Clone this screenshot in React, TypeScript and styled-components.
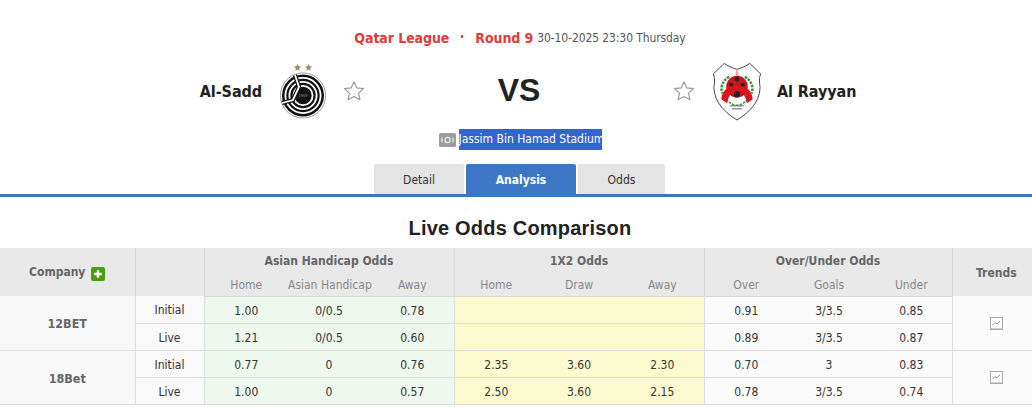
import React from "react";
import styled, { createGlobalStyle } from "styled-components";

const Global = createGlobalStyle`
  html, body { margin: 0; padding: 0; background: #fff; overflow: hidden; }
  body { width: 1032px; height: 408px; font-family: "DejaVu Sans", "Liberation Sans", sans-serif; font-stretch: condensed; font-size: 12px; color: #333; }
`;

const Page = styled.div`
  width: 1040px;
  padding-top: 28px;
`;

const MatchInfo = styled.div`
  height: 20px;
  display: flex;
  justify-content: center;
  align-items: center;
  gap: 4px;
`;

const League = styled.span`
  font-size: 14px;
  font-weight: 700;
  color: #df3b3b;
  letter-spacing: -0.08px;
`;

const Dot = styled.span`
  width: 2px;
  height: 3px;
  margin: 0 8px 3px 8px;
  background: #df3b3b;
`;

const MatchTime = styled.span`
  font-size: 12px;
  color: #555;
  letter-spacing: -0.1px;
`;

const Teams = styled.div`
  display: grid;
  grid-template-columns: 1fr 308px 1fr;
  align-items: center;
  height: 66px;
  margin: 10px 2px 0 0;
`;

const Team = styled.div<{ $away?: boolean }>`
  display: flex;
  align-items: center;
  justify-content: ${(p) => (p.$away ? "flex-start" : "flex-end")};
`;

const TeamName = styled.span<{ $away?: boolean }>`
  font-size: 16px;
  font-weight: 700;
  color: #222;
  letter-spacing: -0.08px;
  margin: ${(p) => (p.$away ? "0 0 0 15px" : "0 18px 0 0")};
`;

const FavStar = styled.svg<{ $away?: boolean }>`
  width: 22px;
  height: 22px;
  margin: ${(p) => (p.$away ? "0 17px 0 0" : "0 0 0 17px")};
`;

const Versus = styled.div`
  text-align: center;
  font-family: "Liberation Sans", sans-serif;
  font-size: 32px;
  font-weight: 700;
  color: #222;
  margin-top: -2px;
`;

const Venue = styled.div`
  display: flex;
  justify-content: center;
  align-items: center;
  gap: 3px;
  margin-top: 5px;
  height: 21px;
`;

const VenueName = styled.span`
  display: block;
  width: 143px;
  line-height: 21px;
  background: #3366cc;
  color: #fff;
  font-size: 12px;
  white-space: nowrap;
  text-align: center;
`;

const TabBar = styled.div`
  display: flex;
  justify-content: center;
  gap: 2px;
  height: 30px;
  margin-top: 14px;
  border-bottom: 3px solid #3c76c4;
  padding-right: 1px;
`;

const Tab = styled.div<{ $active?: boolean; $w: number }>`
  width: ${(p) => p.$w}px;
  display: flex;
  align-items: center;
  justify-content: center;
  padding-top: 2px;
  box-sizing: border-box;
  font-size: 12px;
  font-weight: ${(p) => (p.$active ? 700 : 400)};
  color: ${(p) => (p.$active ? "#fff" : "#333")};
  background: ${(p) => (p.$active ? "#3c76c4" : "#e4e4e4")};
  border-radius: 2px 2px 0 0;
`;

const Title = styled.h2`
  margin: 0;
  height: 51px;
  line-height: 62px;
  text-align: center;
  font-family: "Liberation Sans", sans-serif;
  font-size: 20px;
  font-weight: 700;
  letter-spacing: 0.2px;
  color: #222;
  white-space: nowrap;
`;

const Table = styled.table`
  width: 1040px;
  table-layout: fixed;
  border-collapse: collapse;
`;

const Head = styled.th`
  background: #e9e9e9;
  color: #666;
  font-size: 12px;
  font-weight: 700;
  height: 24px;
  padding: 2px 0 0;
  box-sizing: border-box;
  white-space: nowrap;
  border-left: 1px solid #d8d8d8;
  &:first-child { border-left: 0; }
`;

const SubHead = styled.th<{ $left?: boolean }>`
  background: #e9e9e9;
  color: #888;
  font-size: 12px;
  font-weight: 400;
  height: 24px;
  padding: 2px 0 0 1px;
  box-sizing: border-box;
  white-space: nowrap;
  border-bottom: 1px solid #d8d8d8;
  border-left: ${(p) => (p.$left ? "1px solid #d8d8d8" : "0")};
`;

const PlusBadge = styled.span`
  display: inline-flex;
  align-items: center;
  justify-content: center;
  width: 14px;
  height: 14px;
  margin-left: 6px;
  background: #4b9e14;
  border-radius: 2px;
  vertical-align: -3px;
`;

const Row = styled.tr`
  height: 27px;
`;

const Company = styled.td`
  background: #f8f8f8;
  color: #666;
  font-size: 12.5px;
  font-weight: 700;
  text-align: center;
  padding: 2px 0 0;
  border-bottom: 1px solid #dedede;
`;

const Kind = styled.td`
  background: #f9f9f9;
  color: #333;
  text-align: center;
  padding: 2px 0 0;
  border-left: 1px solid #dedede;
  border-bottom: 1px solid #dedede;
`;

const tones = { green: "#eef8ee", yellow: "#fcfbd0", plain: "#fbfbfb" };

const Cell = styled.td<{ $tone: keyof typeof tones; $left?: boolean }>`
  background: ${(p) => tones[p.$tone]};
  color: #333;
  text-align: center;
  padding: 2px 0 0 1px;
  border-bottom: 1px solid #dedede;
  border-left: ${(p) => (p.$left ? "1px solid #dedede" : "0")};
`;

const TrendCell = styled.td`
  background: #fbfbfb;
  text-align: center;
  padding: 4px 0 0;
  border-left: 1px solid #dedede;
  border-bottom: 1px solid #dedede;
`;

const Star = ({ away }: { away?: boolean }) => (
  <FavStar $away={away} viewBox="0 0 22 22">
    <path
      d="M11 1.8l2.8 6.1 6.7.7-5 4.5 1.4 6.6L11 16.4l-5.9 3.3 1.4-6.6-5-4.5 6.7-.7z"
      fill="#fff"
      stroke="#9a9a9a"
      strokeWidth="1.2"
      strokeLinejoin="round"
    />
  </FavStar>
);

const SaddLogo = () => (
  <svg width="46" height="60" viewBox="0 0 46 60">
    <g fill="#a5865a" transform="translate(0 1.5)">
      <path d="M17.5 1.5l1.1 2.3 2.5.3-1.9 1.7.5 2.5-2.2-1.2-2.2 1.2.5-2.5-1.9-1.7 2.5-.3z" />
      <path d="M28.5 1.5l1.1 2.3 2.5.3-1.9 1.7.5 2.5-2.2-1.2-2.2 1.2.5-2.5-1.9-1.7 2.5-.3z" />
    </g>
    <circle cx="23" cy="34.5" r="22.6" fill="#fff" stroke="#888" strokeWidth="0.8" />
    <circle cx="23" cy="34.5" r="21" fill="#111" />
    <circle cx="23" cy="34.5" r="17.6" fill="none" stroke="#fff" strokeWidth="1.8" />
    <circle cx="23" cy="34.5" r="13.6" fill="none" stroke="#fff" strokeWidth="1.8" />
    <circle cx="23" cy="34.5" r="9.6" fill="none" stroke="#fff" strokeWidth="1.8" />
    <circle cx="23" cy="34.5" r="6.6" fill="#111" />
    <path d="M15 14L19 26 L13 39 L2 42" fill="none" stroke="#111" strokeWidth="4.2" />
    <path d="M15 14L19 26 L13 39 L2 42" fill="none" stroke="#fff" strokeWidth="1.8" />
    <text x="23" y="36" textAnchor="middle" fontSize="4" fill="#b09060" fontFamily="Liberation Sans, sans-serif">1969</text>
  </svg>
);

const RayyanLogo = () => (
  <svg width="50" height="59" viewBox="0 0 50 60">
    <path
      d="M12 1.5C17 5 21 6 25 7.5C29 6 33 5 38 1.5L49 12C47 17 48 22 48.5 26C48 42 36 52 25 59C14 52 2 42 1.5 26C2 22 3 17 1 12Z"
      fill="#fff"
      stroke="#444"
      strokeWidth="1"
    />
    <g fill="none" stroke="#3d8f3d" strokeWidth="2.6" strokeDasharray="2.5 1.2">
      <path d="M17 15C10 19 8 26 10 32" />
      <path d="M33 15C40 19 42 26 40 32" />
      <path d="M14 38C19 43 22 44 25 44M36 38C31 43 28 44 25 44" strokeWidth="1.6" />
    </g>
    <path d="M25 7C23 10 23 13 25 15C27 13 27 10 25 7Z" fill="#e8a8a0" />
    <circle cx="25" cy="25" r="11" fill="#c8141c" />
    <path d="M9 38C10 27 18 24 25 24C32 24 40 27 41 38L35 42C34 34 30 30 25 30C20 30 16 34 15 42Z" fill="#d8141c" />
    <g fill="#222">
      <circle cx="25" cy="17.5" r="2.4" />
      <circle cx="19" cy="23" r="2" />
      <circle cx="31" cy="23" r="2" />
      <circle cx="25" cy="33" r="3.2" />
    </g>
    <g fill="#777">
      <rect x="18" y="44" width="14" height="1.2" />
      <rect x="20" y="47" width="10" height="1.2" />
    </g>
  </svg>
);

const StadiumIcon = () => (
  <svg width="17" height="14" viewBox="0 0 17 14">
    <rect width="17" height="14" rx="1.5" fill="#9c9c9c" />
    <circle cx="8.5" cy="7" r="2.6" fill="none" stroke="#eee" strokeWidth="1.2" />
    <path d="M3 4.5v5M14 4.5v5" stroke="#eee" strokeWidth="1.2" />
  </svg>
);

const TrendIcon = () => (
  <svg width="13" height="13" viewBox="0 0 13 13">
    <rect x="0.5" y="0.5" width="12" height="12" fill="#fff" stroke="#a9a9a9" />
    <path d="M2.5 8l2.5-2.5 2 1.5 3-3" fill="none" stroke="#b8776b" strokeWidth="0.9" />
    <path d="M1 11.5h11" stroke="#cfcfcf" />
  </svg>
);

const rows = [
  {
    name: "12BET",
    lines: [
      { kind: "Initial", asian: ["1.00", "0/0.5", "0.78"], x12: ["", "", ""], ou: ["0.91", "3/3.5", "0.85"] },
      { kind: "Live", asian: ["1.21", "0/0.5", "0.60"], x12: ["", "", ""], ou: ["0.89", "3/3.5", "0.87"] },
    ],
  },
  {
    name: "18Bet",
    lines: [
      { kind: "Initial", asian: ["0.77", "0", "0.76"], x12: ["2.35", "3.60", "2.30"], ou: ["0.70", "3", "0.83"] },
      { kind: "Live", asian: ["1.00", "0", "0.57"], x12: ["2.50", "3.60", "2.15"], ou: ["0.78", "3/3.5", "0.74"] },
    ],
  },
];

const widths = [135, 69, 83, 83, 84, 83, 83, 84, 83, 83, 82, 88];

export default function App() {
  return (
    <Page>
      <Global />
      <MatchInfo>
        <League>Qatar League</League>
        <Dot />
        <League>Round 9</League>
        <MatchTime>30-10-2025 23:30 Thursday</MatchTime>
      </MatchInfo>
      <Teams>
        <Team>
          <TeamName>Al-Sadd</TeamName>
          <SaddLogo />
          <Star />
        </Team>
        <Versus>VS</Versus>
        <Team $away>
          <Star away />
          <RayyanLogo />
          <TeamName $away>Al Rayyan</TeamName>
        </Team>
      </Teams>
      <Venue>
        <StadiumIcon />
        <VenueName>Jassim Bin Hamad Stadium</VenueName>
      </Venue>
      <TabBar>
        <Tab $w={90}>Detail</Tab>
        <Tab $w={110} $active>Analysis</Tab>
        <Tab $w={87}>Odds</Tab>
      </TabBar>
      <Title>Live Odds Comparison</Title>
      <Table>
        <colgroup>
          {widths.map((w, i) => (
            <col key={i} style={{ width: w }} />
          ))}
        </colgroup>
        <thead>
          <tr>
            <Head rowSpan={2}>
              Company
              <PlusBadge>
                <svg width="10" height="10" viewBox="0 0 10 10">
                  <path d="M5 1.2v7.6M1.2 5h7.6" stroke="#fff" strokeWidth="2.4" />
                </svg>
              </PlusBadge>
            </Head>
            <Head rowSpan={2} />
            <Head colSpan={3}>Asian Handicap Odds</Head>
            <Head colSpan={3}>1X2 Odds</Head>
            <Head colSpan={3}>Over/Under Odds</Head>
            <Head rowSpan={2}>Trends</Head>
          </tr>
          <tr>
            <SubHead $left>Home</SubHead>
            <SubHead>Asian Handicap</SubHead>
            <SubHead>Away</SubHead>
            <SubHead $left>Home</SubHead>
            <SubHead>Draw</SubHead>
            <SubHead>Away</SubHead>
            <SubHead $left>Over</SubHead>
            <SubHead>Goals</SubHead>
            <SubHead>Under</SubHead>
          </tr>
        </thead>
        <tbody>
          {rows.map((r) =>
            r.lines.map((l, i) => (
              <Row key={r.name + l.kind}>
                {i === 0 && <Company rowSpan={2}>{r.name}</Company>}
                <Kind>{l.kind}</Kind>
                {l.asian.map((v, j) => (
                  <Cell key={j} $tone="green" $left={j === 0}>{v}</Cell>
                ))}
                {l.x12.map((v, j) => (
                  <Cell key={j} $tone="yellow" $left={j === 0}>{v}</Cell>
                ))}
                {l.ou.map((v, j) => (
                  <Cell key={j} $tone="plain" $left={j === 0}>{v}</Cell>
                ))}
                {i === 0 && (
                  <TrendCell rowSpan={2}>
                    <TrendIcon />
                  </TrendCell>
                )}
              </Row>
            ))
          )}
        </tbody>
      </Table>
    </Page>
  );
}
